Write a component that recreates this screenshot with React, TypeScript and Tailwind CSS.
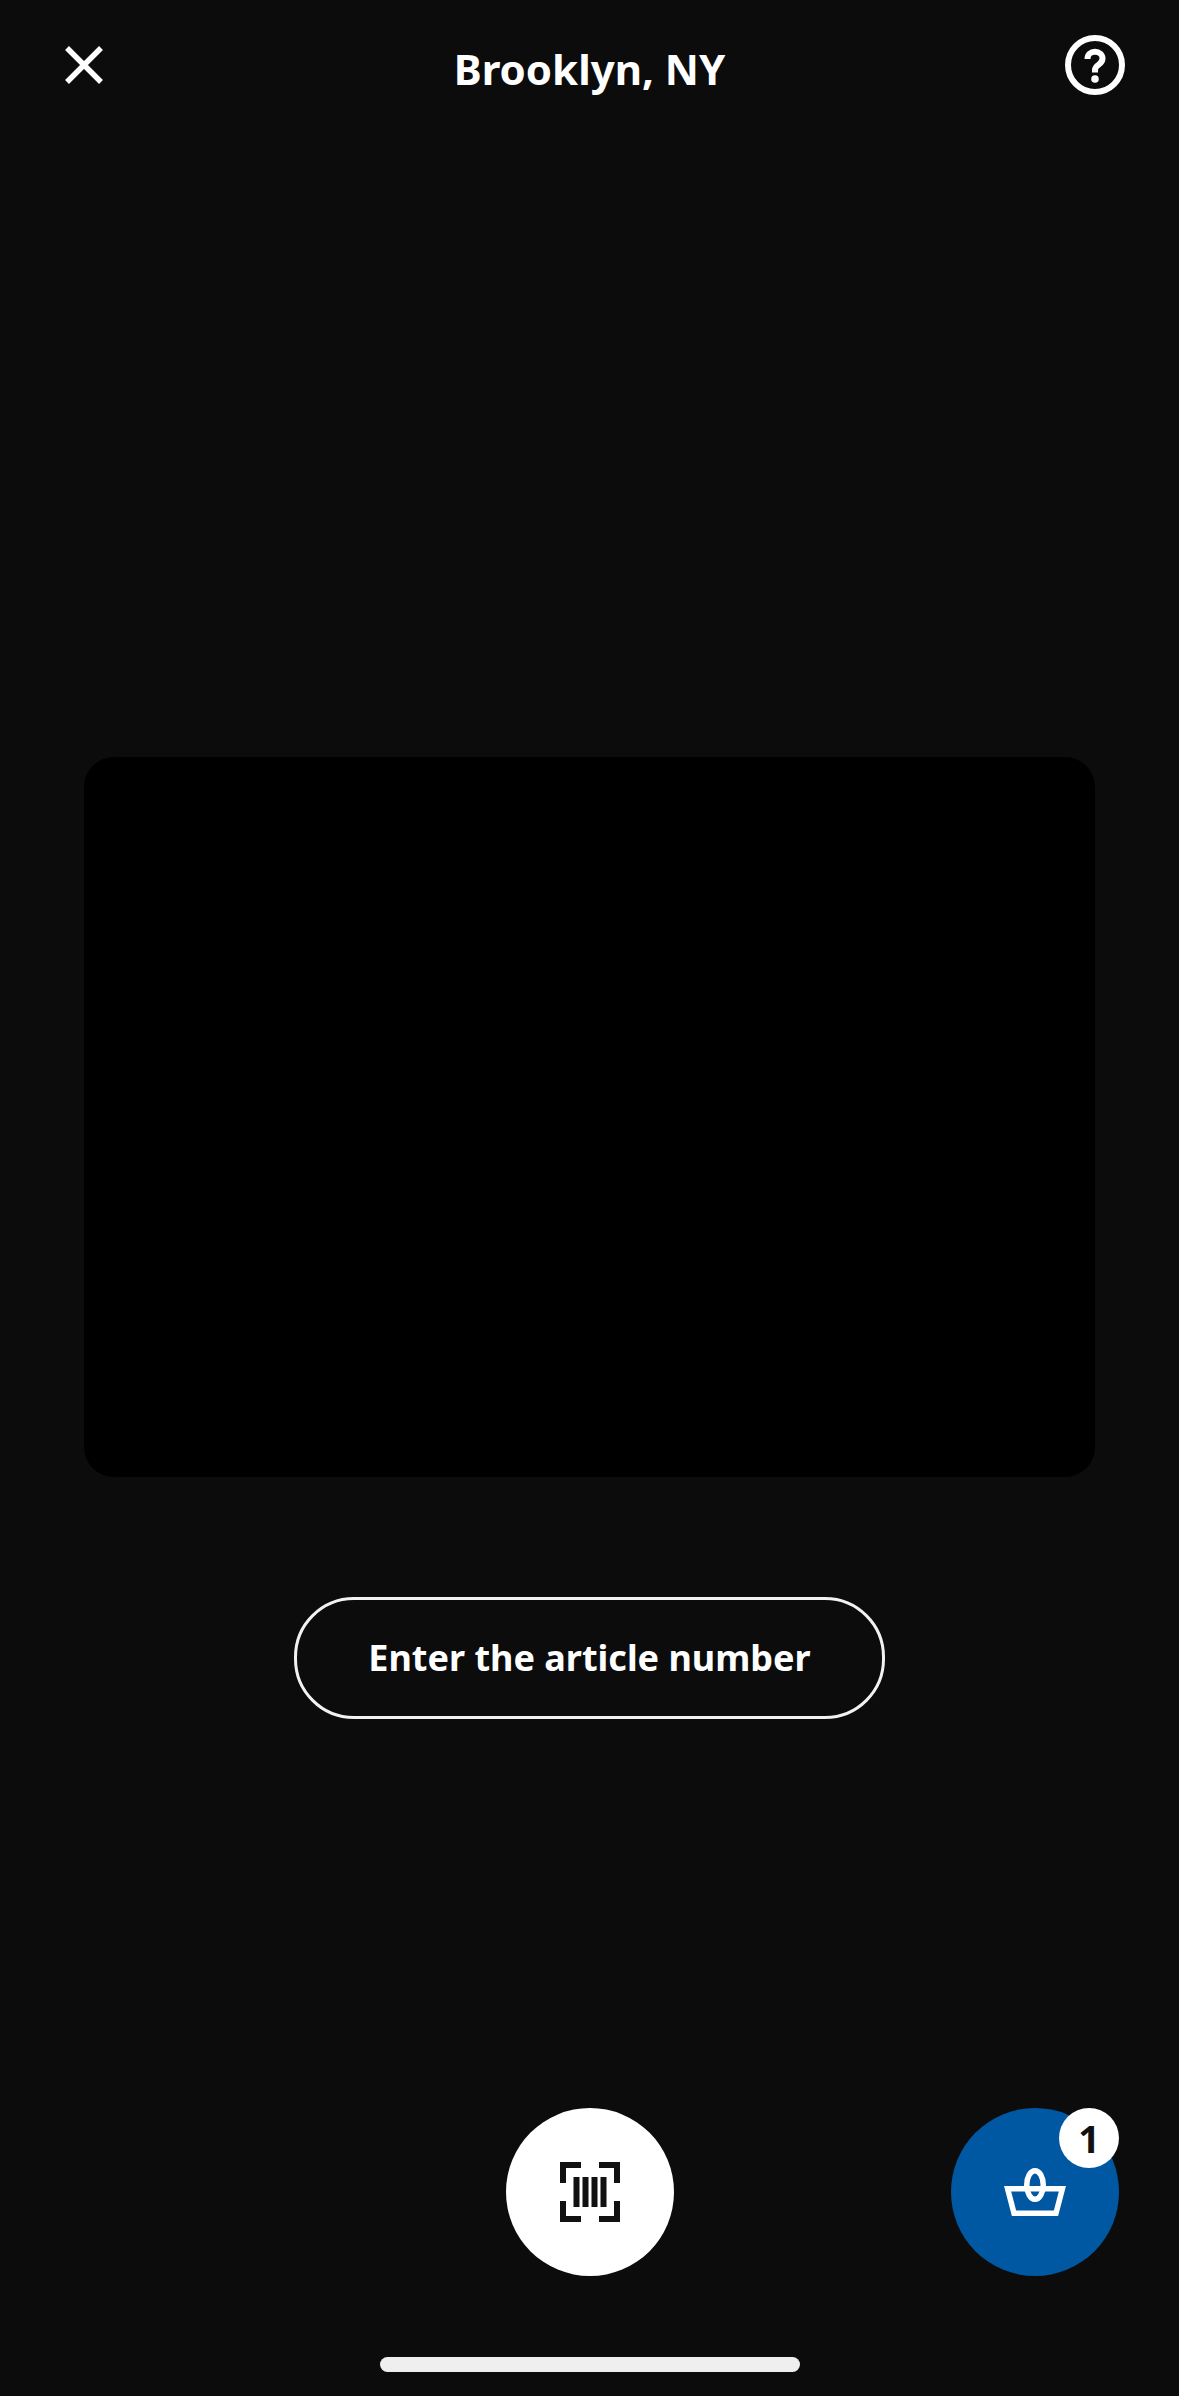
const CloseIcon = () => (
  <svg width="38" height="38" viewBox="0 0 38 38" fill="none" stroke="white" strokeWidth="5.5" strokeLinecap="butt">
    <path d="M2 2L36 36M36 2L2 36" />
  </svg>
);

const HelpIcon = () => (
  <svg width="60" height="60" viewBox="0 0 60 60" fill="none">
    <circle cx="30" cy="30" r="27" stroke="white" strokeWidth="6" />
    <path d="M22.500 24c0-4.600 3.200-7.200 7.500-7.200s7.500 2.700 7.500 6.700c0 3.200-1.800 4.700-3.800 6.100-2.200 1.500-3.700 2.800-3.700 5.400v2.500" stroke="white" strokeWidth="6" />
    <circle cx="30" cy="44" r="3.800" fill="white" />
  </svg>
);

const BarcodeIcon = () => (
  <svg width="60" height="60" viewBox="0 0 60 60" fill="#111111">
    <path d="M0 0h21v6H6v15H0zM39 0h21v21h-6V6H39zM0 39h6v15h15v6H0zM54 39h6v21H39v-6h15z" />
    <path d="M13.500 15h6v30h-6zM22.500 15h6v30h-6zM31.500 15h6v30h-6zM40.500 15h6v30h-6z" />
  </svg>
);

const BasketIcon = () => (
  <svg width="62" height="48" viewBox="0 0 62 48" fill="none" stroke="white" strokeWidth="5.500">
    <path d="M3.600 20.750h54.800l-6.400 24.500H10z" />
    <ellipse cx="31" cy="17" rx="8.250" ry="14.250" />
  </svg>
);

export default function App() {
  return (
    <div
      className="flex h-[2396px] w-[1179px] flex-col items-center bg-[#0c0c0c] text-white"
      style={{ fontFamily: '"Noto Sans", "Open Sans", sans-serif' }}
    >
      <header className="mt-[35px] grid h-[60px] w-full grid-cols-[1fr_auto_1fr] items-center px-[54px]">
        <button className="ml-[11px] flex items-center justify-self-start">
          <CloseIcon />
        </button>
        <h1 className="translate-y-[4px] text-[42px] font-bold leading-[60px]">Brooklyn, NY</h1>
        <button className="flex items-center justify-self-end">
          <HelpIcon />
        </button>
      </header>

      <div className="mt-[662px] h-[720px] w-[1011px] rounded-[30px] bg-black" />

      <button className="mt-[120px] flex h-[122px] w-[591px] items-center justify-center rounded-[60px] border-[3px] border-[#f2f2f2] text-[36px] font-bold">
        Enter the article number
      </button>

      <div className="mt-[389px] grid h-[168px] w-full grid-cols-[506px_168px_1fr]">
        <div />
        <button className="flex h-[168px] w-[168px] items-center justify-center rounded-full bg-white">
          <BarcodeIcon />
        </button>
        <div className="flex justify-end pr-[60px]">
          <button className="relative flex h-[168px] w-[168px] items-center justify-center rounded-full bg-[#0058a3]">
            <BasketIcon />
            <span className="absolute right-0 top-0 flex h-[60px] w-[60px] items-center justify-center rounded-full bg-white text-[38px] font-bold text-[#111111]">
              1
            </span>
          </button>
        </div>
      </div>

      <div className="mt-[81px] h-[15px] w-[420px] rounded-full bg-[#efefef]" />
    </div>
  );
}
